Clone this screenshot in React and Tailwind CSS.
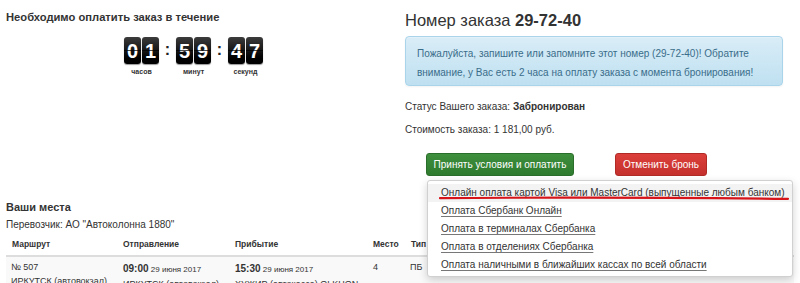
import React from "react";

function Card({ d }) {
  return (
    <div className="relative w-[17px] h-[27px] rounded-[3px] bg-gradient-to-b from-[#3c3c3c] via-[#161616] to-[#000] flex items-center justify-center shadow-[0_1px_1px_rgba(0,0,0,0.4)]">
      <span className="text-white font-bold text-[20px] leading-none">{d}</span>
      <div className="absolute left-0 right-0 top-[13px] h-px bg-[#000]/70" />
    </div>
  );
}

function Group({ v, label }) {
  return (
    <div className="w-[35px] flex flex-col items-center">
      <div className="flex gap-[1px]">
        <Card d={v[0]} />
        <Card d={v[1]} />
      </div>
      <div className="mt-[4px] text-[7px] font-bold text-[#333] leading-[7px] whitespace-nowrap">{label}</div>
    </div>
  );
}

function Colon() {
  return <div className="w-[17px] text-center text-[16px] font-bold text-[#222] leading-none mt-[5px]">:</div>;
}

export default function App() {
  return (
    <div className="w-[800px] h-[283px] overflow-hidden bg-white text-[#333] relative" style={{ fontFamily: '"Liberation Sans", Arial, sans-serif' }}>
      <div className="flex items-start">
        {/* left */}
        <div className="w-[399px] pl-[6px] pt-[10px]">
          <div className="text-[11.2px] font-bold leading-[14px] text-[#333]">Необходимо оплатить заказ в течение</div>
          <div className="flex items-start mt-[13px] pl-[118px]">
            <Group v="01" label="часов" />
            <Colon />
            <Group v="59" label="минут" />
            <Colon />
            <Group v="47" label="секунд" />
          </div>
        </div>
        {/* right */}
        <div className="flex-1 pl-[6px] pr-[17px] pt-[10px]">
          <div className="text-[16.5px] leading-[20px] text-[#333]">
            Номер заказа <b>29-72-40</b>
          </div>
          <div className="mt-[6px] h-[50px] rounded-[4px] border border-[#a9d4ea] bg-gradient-to-b from-[#d9edf7] to-[#bfe0f1] text-[#3a6d8a] text-[10px] leading-[19px] pl-[11px] pt-[7px] shadow-[inset_0_1px_0_rgba(255,255,255,0.25),0_1px_2px_rgba(0,0,0,0.05)]">
            Пожалуйста, запишите или запомните этот номер (29-72-40)! Обратите внимание, у Вас есть 2 часа на оплату заказа с момента бронирования!
          </div>
          <div className="mt-[14px] text-[10px] leading-[14px]">
            Статус Вашего заказа: <b>Забронирован</b>
          </div>
          <div className="mt-[9px] text-[10px] leading-[14px]">Стоимость заказа: 1 181,00 руб.</div>
          <div className="mt-[16px] flex h-[23px]">
            <div className="ml-[21px] w-[148px] h-[23px] rounded-[3px] border border-[#2b6e2b] bg-gradient-to-b from-[#3e8f3e] to-[#2e7a2e] text-white text-[10px] flex items-center justify-center">
              Принять условия и оплатить
            </div>
            <div className="ml-[41px] w-[92px] h-[23px] rounded-[3px] border border-[#b02a26] bg-gradient-to-b from-[#dc3f3b] to-[#c4302c] text-white text-[10px] flex items-center justify-center">
              Отменить бронь
            </div>
          </div>
        </div>
      </div>

      {/* bottom */}
      <div className="mt-[24px] px-[6px]">
        <div className="text-[11px] font-bold leading-[14px]">Ваши места</div>
        <div className="mt-[4px] text-[10px] leading-[14px]">Перевозчик: АО "Автоколонна 1880"</div>
        <div>
          <div className="flex pl-[6px] text-[8.5px] font-bold leading-[12px] h-[25px] items-center border-b-2 border-[#ddd]">
            <div className="w-[111px]">Маршрут</div>
            <div className="w-[112px]">Отправление</div>
            <div className="w-[138px]">Прибытие</div>
            <div className="w-[38px]">Место</div>
            <div>Тип</div>
          </div>
          <div className="flex pl-[5px] leading-[14px] bg-[#f9f9f9] pt-[3px] h-[40px]">
            <div className="w-[112px] text-[9px]">
              <div>№ 507</div>
              <div>ИРКУТСК (автовокзал)</div>
            </div>
            <div className="w-[112px] pt-[2px] text-[8px]">
              <div><b className="text-[10px]">09:00</b> 29 июня 2017</div>
              <div className="text-[9px]">ИРКУТСК (автовокзал)</div>
            </div>
            <div className="w-[138px] pt-[2px] text-[8px]">
              <div><b className="text-[10px]">15:30</b> 29 июня 2017</div>
              <div className="text-[9px]">ХУЖИР (автокасса) OLKHON</div>
            </div>
            <div className="w-[37px] text-[9px]">4</div>
            <div className="text-[9px]">ПБ</div>
          </div>
        </div>
      </div>

      {/* dropdown */}
      <div className="absolute left-[427px] top-[180px] w-[366px] h-[97px] bg-white border border-[#d0d0d0] rounded-[3px] shadow-[0_3px_8px_rgba(0,0,0,0.18)] text-[10px] text-[#333] leading-[18px] pt-[3px]">
        <div className="bg-[#f3f3f3] pl-[13px] h-[18px] whitespace-nowrap">Онлайн оплата картой Visa или MasterCard (выпущенные любым банком)</div>
        <div className="pl-[13px] underline decoration-[#777] underline-offset-2">Оплата Сбербанк Онлайн</div>
        <div className="pl-[13px] underline decoration-[#777] underline-offset-2">Оплата в терминалах Сбербанка</div>
        <div className="pl-[13px] underline decoration-[#777] underline-offset-2">Оплата в отделениях Сбербанка</div>
        <div className="pl-[13px] underline decoration-[#777] underline-offset-2">Оплата наличными в ближайших кассах по всей области</div>
      </div>
      <svg className="absolute left-[436px] top-[194px]" width="356" height="8" viewBox="0 0 356 8">
        <path d="M4 4.2 C 90 3.4, 200 3.2, 352 4.8" stroke="#d6141a" strokeWidth="2.2" fill="none" strokeLinecap="round" />
      </svg>
    </div>
  );
}
